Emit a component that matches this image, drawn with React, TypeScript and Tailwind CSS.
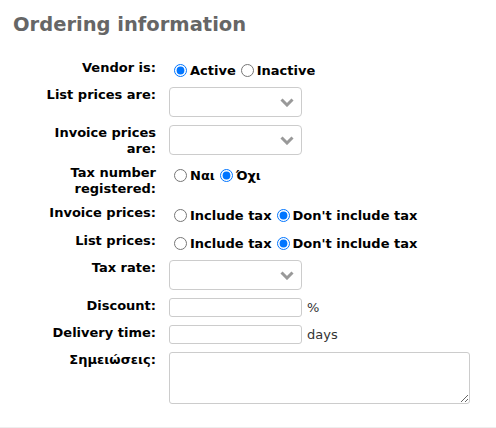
import React from "react";

function Label({ children }: { children: React.ReactNode }) {
  return (
    <div className="w-[156px] shrink-0 pl-[36px] text-right font-bold leading-[16px] text-black">
      {children}
    </div>
  );
}

function Radio({ checked, name, label }: { checked?: boolean; name: string; label: string }) {
  return (
    <label className="flex items-start">
      <input
        type="radio"
        name={name}
        defaultChecked={checked}
        className="ml-[5px] mr-[3px] mt-[4px] h-[13px] w-[13px]"
      />
      <span className="pt-[3px] font-bold leading-[16px] text-black">{label}</span>
    </label>
  );
}

function FakeSelect() {
  return (
    <div className="flex h-[30px] w-[133px] items-center justify-end rounded-[4px] border border-[#cccccc] bg-white pr-[7px]">
      <svg width="14" height="9" viewBox="0 0 14 9" fill="none">
        <polyline points="1.5,1.5 7,7 12.5,1.5" stroke="#999999" strokeWidth="3" strokeLinecap="butt" strokeLinejoin="miter" />
      </svg>
    </div>
  );
}

function TextBox() {
  return <input type="text" className="h-[19px] w-[133px] rounded-[3px] border border-[#cccccc] bg-white px-1 outline-none" />;
}

export default function App() {
  return (
    <div className="h-[428px] w-[496px] overflow-hidden bg-white font-['DejaVu_Sans',sans-serif] text-[13px]">
      <h2 className="pl-[13px] pt-[13px] text-[19.5px] font-bold leading-[23px] text-[#666666]">Ordering information</h2>
      <div className="mt-[24px] flex flex-col gap-[8px]">
        <div className="flex h-[19px] items-start">
          <Label>Vendor is:</Label>
          <div className="ml-[13px] flex">
            <Radio name="vendor" checked label="Active" />
            <Radio name="vendor" label="Inactive" />
          </div>
        </div>
        <div className="flex items-start">
          <Label>List prices are:</Label>
          <div className="ml-[13px]">
            <FakeSelect />
          </div>
        </div>
        <div className="flex items-start">
          <Label>Invoice prices are:</Label>
          <div className="ml-[13px]">
            <FakeSelect />
          </div>
        </div>
        <div className="flex items-start">
          <Label>Tax number registered:</Label>
          <div className="ml-[13px] flex">
            <Radio name="taxreg" label="Ναι" />
            <Radio name="taxreg" checked label="Όχι" />
          </div>
        </div>
        <div className="flex h-[20px] items-start">
          <Label>Invoice prices:</Label>
          <div className="ml-[13px] flex">
            <Radio name="invtax" label="Include tax" />
            <Radio name="invtax" checked label="Don't include tax" />
          </div>
        </div>
        <div className="flex h-[19px] items-start">
          <Label>List prices:</Label>
          <div className="ml-[13px] flex">
            <Radio name="listtax" label="Include tax" />
            <Radio name="listtax" checked label="Don't include tax" />
          </div>
        </div>
        <div className="flex items-start">
          <Label>Tax rate:</Label>
          <div className="ml-[13px]">
            <FakeSelect />
          </div>
        </div>
        <div className="flex items-start">
          <Label>Discount:</Label>
          <div className="ml-[13px] flex items-center">
            <TextBox />
            <span className="ml-[5px] leading-[16px] text-[#333333]">%</span>
          </div>
        </div>
        <div className="flex items-start">
          <Label>Delivery time:</Label>
          <div className="ml-[13px] flex items-center">
            <TextBox />
            <span className="ml-[5px] leading-[16px] text-[#333333]">days</span>
          </div>
        </div>
        <div className="flex items-start">
          <Label>Σημειώσεις:</Label>
          <div className="ml-[13px]">
            <textarea className="block h-[52px] w-[301px] rounded-[3px] border border-[#cccccc] bg-white outline-none" />
          </div>
        </div>
      </div>
      <div className="mt-[23px] h-[2px] border-t border-[#eeeeee] bg-[#f4f4f4]" />
    </div>
  );
}
